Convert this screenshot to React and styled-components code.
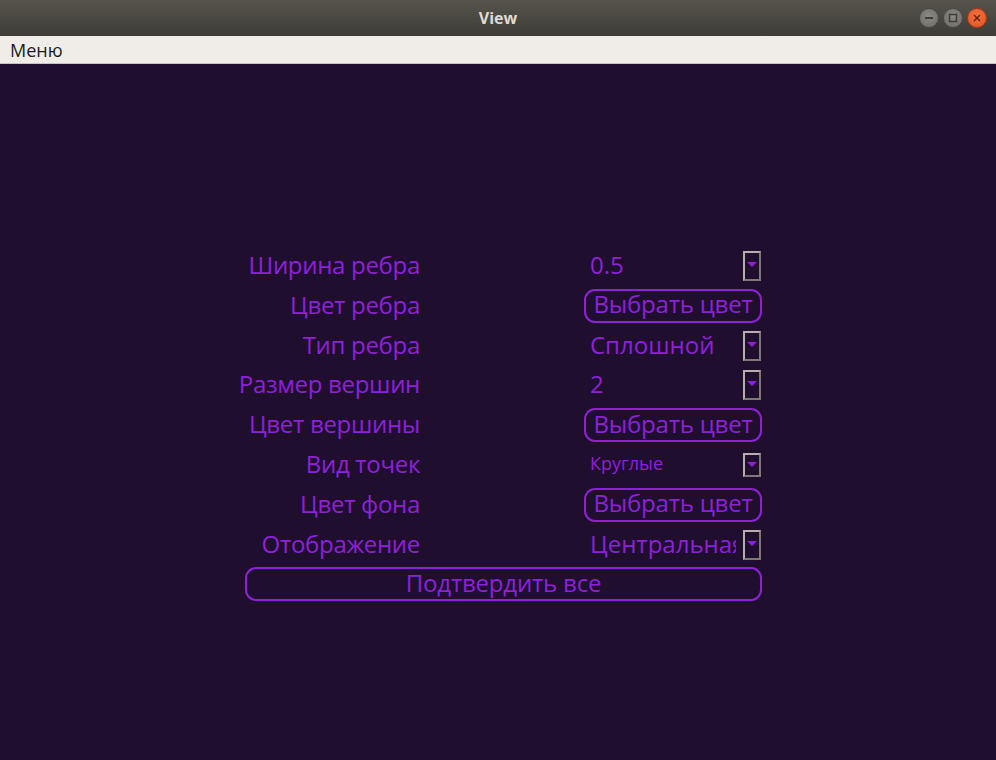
import React from 'react'
import styled, { createGlobalStyle } from 'styled-components'

const Global = createGlobalStyle`
  html, body {
    margin: 0;
    padding: 0;
    width: 996px;
    height: 760px;
    overflow: hidden;
    background: #200e2e;
  }
`;

const Window = styled.div`
  width: 996px;
  height: 760px;
  display: flex;
  flex-direction: column;
  font-family: 'Open Sans', 'DejaVu Sans', sans-serif;
`;

const TitleBar = styled.div`
  height: 36px;
  flex: none;
  background: linear-gradient(#57544c, #3d3c37);
  display: flex;
  align-items: center;
  justify-content: center;
  position: relative;
  color: #dfdbd2;
  font-weight: 700;
  font-size: 16px;
`;

const Controls = styled.div`
  position: absolute;
  right: 9px;
  top: 8px;
  display: flex;
  gap: 4px;
`;

const Ctl = styled.div`
  width: 20px;
  height: 20px;
  border-radius: 50%;
  box-sizing: border-box;
  border: 1px solid ${p => (p.close ? '#a83a18' : '#4a4945')};
  background: ${p => (p.close ? 'radial-gradient(circle at 50% 40%, #f2743f, #e0501f)' : 'radial-gradient(circle at 50% 40%, #8c8a84, #6c6a64)')};
  display: flex;
  align-items: center;
  justify-content: center;
`;

const MenuBar = styled.div`
  height: 27px;
  flex: none;
  background: #f0ede9;
  border-bottom: 1px solid #c7c3bd;
  display: flex;
  align-items: center;
  padding-left: 10px;
  font-size: 18px;
  color: #1a1a1a;
`;

const Main = styled.div`
  flex: 1;
  display: flex;
  justify-content: center;
  padding: 185px 0 0 11px;
`;

const Form = styled.div`
  display: grid;
  grid-template-columns: 175px 178px;
  column-gap: 164px;
  grid-auto-rows: 34px;
  row-gap: 5.8px;
  align-self: flex-start;
  color: #8e20da;
  font-size: 24px;
`;

const Label = styled.div`
  display: flex;
  align-items: center;
  justify-content: flex-end;
  white-space: nowrap;
  letter-spacing: -0.3px;
  padding-bottom: 3px;
`;

const Combo = styled.div`
  display: flex;
  align-items: center;
  overflow: hidden;
`;

const ComboText = styled.div`
  flex: 1;
  min-width: 0;
  margin: 0 7px 3px 6px;
  white-space: nowrap;
  overflow: hidden;
  font-size: ${p => (p.small ? '18px' : '24px')};
`;

const Arrow = styled.div`
  flex: none;
  width: 18px;
  height: ${p => (p.short ? '24px' : '30px')};
  margin-right: 1px;
  box-sizing: border-box;
  border: 2px solid #b4b0aa;
  border-right-color: #7d7a75;
  border-bottom-color: #7d7a75;
  background: #200e2e;
  display: flex;
  justify-content: center;
  padding-top: ${p => (p.short ? '7px' : '9px')};

  &::after {
    content: '';
    width: 0;
    height: 0;
    border-left: 5px solid transparent;
    border-right: 5px solid transparent;
    border-top: 5px solid #8e20da;
  }
`;

const PillButton = styled.button`
  box-sizing: border-box;
  display: flex;
  align-items: center;
  justify-content: center;
  border: 2px solid #8e20da;
  border-radius: 11px;
  background: transparent;
  color: #8e20da;
  font-family: inherit;
  font-size: 24px;
  line-height: 1;
  letter-spacing: -0.2px;
  padding: 0 0 3px;
  margin: 0;
  height: 34px;
  white-space: nowrap;
  overflow: hidden;
  grid-column: ${p => (p.wide ? '1 / -1' : 'auto')};
`;

const rows = [
  { label: 'Ширина ребра', kind: 'combo', value: '0.5' },
  { label: 'Цвет ребра', kind: 'color' },
  { label: 'Тип ребра', kind: 'combo', value: 'Сплошной' },
  { label: 'Размер вершин', kind: 'combo', value: '2' },
  { label: 'Цвет вершины', kind: 'color' },
  { label: 'Вид точек', kind: 'combo', value: 'Круглые', small: true },
  { label: 'Цвет фона', kind: 'color' },
  { label: 'Отображение', kind: 'combo', value: 'Центральная' },
];

const App = () => {
  return (
    <Window>
      <Global />
      <TitleBar>
        View
        <Controls>
          <Ctl>
            <svg width="10" height="10" viewBox="0 0 10 10"><path d="M1 5h8" stroke="#3e3d39" strokeWidth="2" /></svg>
          </Ctl>
          <Ctl>
            <svg width="10" height="10" viewBox="0 0 10 10"><rect x="1.5" y="1.5" width="7" height="7" fill="none" stroke="#3e3d39" strokeWidth="1.5" /></svg>
          </Ctl>
          <Ctl close>
            <svg width="10" height="10" viewBox="0 0 10 10"><path d="M2 2l6 6M8 2l-6 6" stroke="#6b2208" strokeWidth="1.5" /></svg>
          </Ctl>
        </Controls>
      </TitleBar>
      <MenuBar>Меню</MenuBar>
      <Main>
        <Form>
          {rows.map(r => (
            <React.Fragment key={r.label}>
              <Label>{r.label}</Label>
              {r.kind === 'color' ? (
                <PillButton>Выбрать цвет</PillButton>
              ) : (
                <Combo>
                  <ComboText small={r.small}>{r.value}</ComboText>
                  <Arrow short={r.small} />
                </Combo>
              )}
            </React.Fragment>
          ))}
          <PillButton wide>Подтвердить все</PillButton>
        </Form>
      </Main>
    </Window>
  );
}

export default App;
